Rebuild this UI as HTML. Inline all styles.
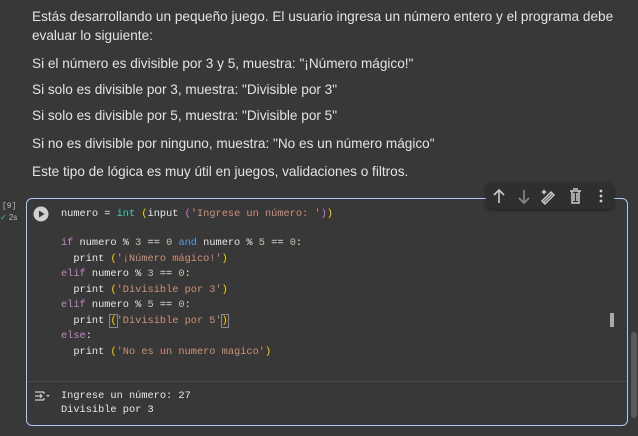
<!DOCTYPE html>
<html><head><meta charset="utf-8"><style>
body{margin:0;width:638px;height:436px;background:#383838;overflow:hidden;position:relative;font-family:"Liberation Sans",sans-serif;color:#e3e3e3}
.t{position:absolute;left:32px;font-size:13.6px;white-space:nowrap}
.cell{position:absolute;left:26px;top:198px;width:600px;height:226px;border:1px solid #a8c7fa;border-radius:6px}
.sep{position:absolute;left:27px;top:381px;width:600px;height:1px;background:#4a4a4a}
.code{position:absolute;left:61px;font-family:"Liberation Mono",monospace;font-size:10.3px;white-space:pre;color:#e8e8e8}
.k{color:#c586c0}.b{color:#569cd6}.f{color:#4ec9b0}.s{color:#ce9178}.n{color:#b5cea8}.p{color:#ffd700}.pm{color:#da70d6}
.tb{position:absolute;left:486px;top:183px;width:128px;height:26px;background:#2f2f2f;border-radius:6px;box-shadow:0 1px 3px rgba(0,0,0,.5)}
</style></head><body>
<div class="t" style="top:9px">Estás desarrollando un pequeño juego. El usuario ingresa un número entero y el programa debe</div>
<div class="t" style="top:28px">evaluar lo siguiente:</div>
<div class="t" style="top:56px">Si el número es divisible por 3 y 5, muestra: "¡Número mágico!"</div>
<div class="t" style="top:82px">Si solo es divisible por 3, muestra: "Divisible por 3"</div>
<div class="t" style="top:108px">Si solo es divisible por 5, muestra: "Divisible por 5"</div>
<div class="t" style="top:136px">Si no es divisible por ninguno, muestra: "No es un número mágico"</div>
<div class="t" style="top:164px">Este tipo de lógica es muy útil en juegos, validaciones o filtros.</div>

<div style="position:absolute;left:2px;top:202px;font-family:'Liberation Mono',monospace;font-size:8px;color:#bbb">[9]</div>
<div style="position:absolute;left:0px;top:213px;font-size:8px;color:#bbb"><span style="color:#5bb974">✓</span> 2s</div>

<div class="cell"></div>
<div class="sep"></div>
<svg style="position:absolute;left:33px;top:206px" width="16" height="16"><circle cx="8" cy="8" r="7.5" fill="#d0d0d0"/><path d="M6 4.5L11.5 8L6 11.5Z" fill="#383838"/></svg>

<div class="code" style="top:208px">numero = <span class="f">int</span> <span class="p">(</span>input <span class="pm">(</span><span class="s">'Ingrese un número: '</span><span class="pm">)</span><span class="p">)</span></div>
<div class="code" style="top:237px"><span class="k">if</span> numero % <span class="n">3</span> == <span class="n">0</span> <span class="b">and</span> numero % <span class="n">5</span> == <span class="n">0</span>:</div>
<div class="code" style="top:253px">  print <span class="p">(</span><span class="s">'¡Número mágico!'</span><span class="p">)</span></div>
<div class="code" style="top:268px"><span class="k">elif</span> numero % <span class="n">3</span> == <span class="n">0</span>:</div>
<div class="code" style="top:284px">  print <span class="p">(</span><span class="s">'Divisible por 3'</span><span class="p">)</span></div>
<div class="code" style="top:299px"><span class="k">elif</span> numero % <span class="n">5</span> == <span class="n">0</span>:</div>
<div class="code" style="top:315px">  print <span class="p" style="outline:1px solid #888">(</span><span class="s">'Divisible por 5'</span><span class="p" style="outline:1px solid #888">)</span></div>
<div class="code" style="top:330px"><span class="k">else</span>:</div>
<div class="code" style="top:346px">  print <span class="p">(</span><span class="s">'No es un numero magico'</span><span class="p">)</span></div>

<div class="code" style="top:390px">Ingrese un número: 27</div>
<div class="code" style="top:404px">Divisible por 3</div>
<svg style="position:absolute;left:34px;top:391px" width="16" height="10"><path d="M1 1H10M1 9H10M1 5H8M6 3L8 5L6 7M10 1V3M10 9V7" stroke="#ccc" fill="none" stroke-width="1.2"/><path d="M12 4H16L14 6Z" fill="#ccc"/></svg>

<div style="position:absolute;left:610px;top:313px;width:4px;height:14px;background:#aaa"></div>
<div style="position:absolute;left:631px;top:332px;width:6px;height:86px;background:#5a5a5a;border-radius:3px"></div>

<div class="tb"></div>
<svg style="position:absolute;left:486px;top:183px" width="128" height="26">
<path d="M13 20V7M8 12L13 7L18 12" stroke="#ccc" stroke-width="1.6" fill="none"/>
<path d="M38 7V20M33 15L38 20L43 15" stroke="#888" stroke-width="1.6" fill="none"/>
<path d="M57 20L67 10M59 21L68 12L65 9L56 18Z" stroke="#ccc" stroke-width="1.4" fill="none"/><path d="M58 6L59 8L61 9L59 10L58 12L57 10L55 9L57 8Z" fill="#ccc"/>
<path d="M84 8H95M86 8V20H93V8M88 10V18M91 10V18M87 6H92" stroke="#ccc" stroke-width="1.5" fill="none"/>
<circle cx="115" cy="8" r="1.4" fill="#ccc"/><circle cx="115" cy="13" r="1.4" fill="#ccc"/><circle cx="115" cy="18" r="1.4" fill="#ccc"/>
</svg>
</body></html>
